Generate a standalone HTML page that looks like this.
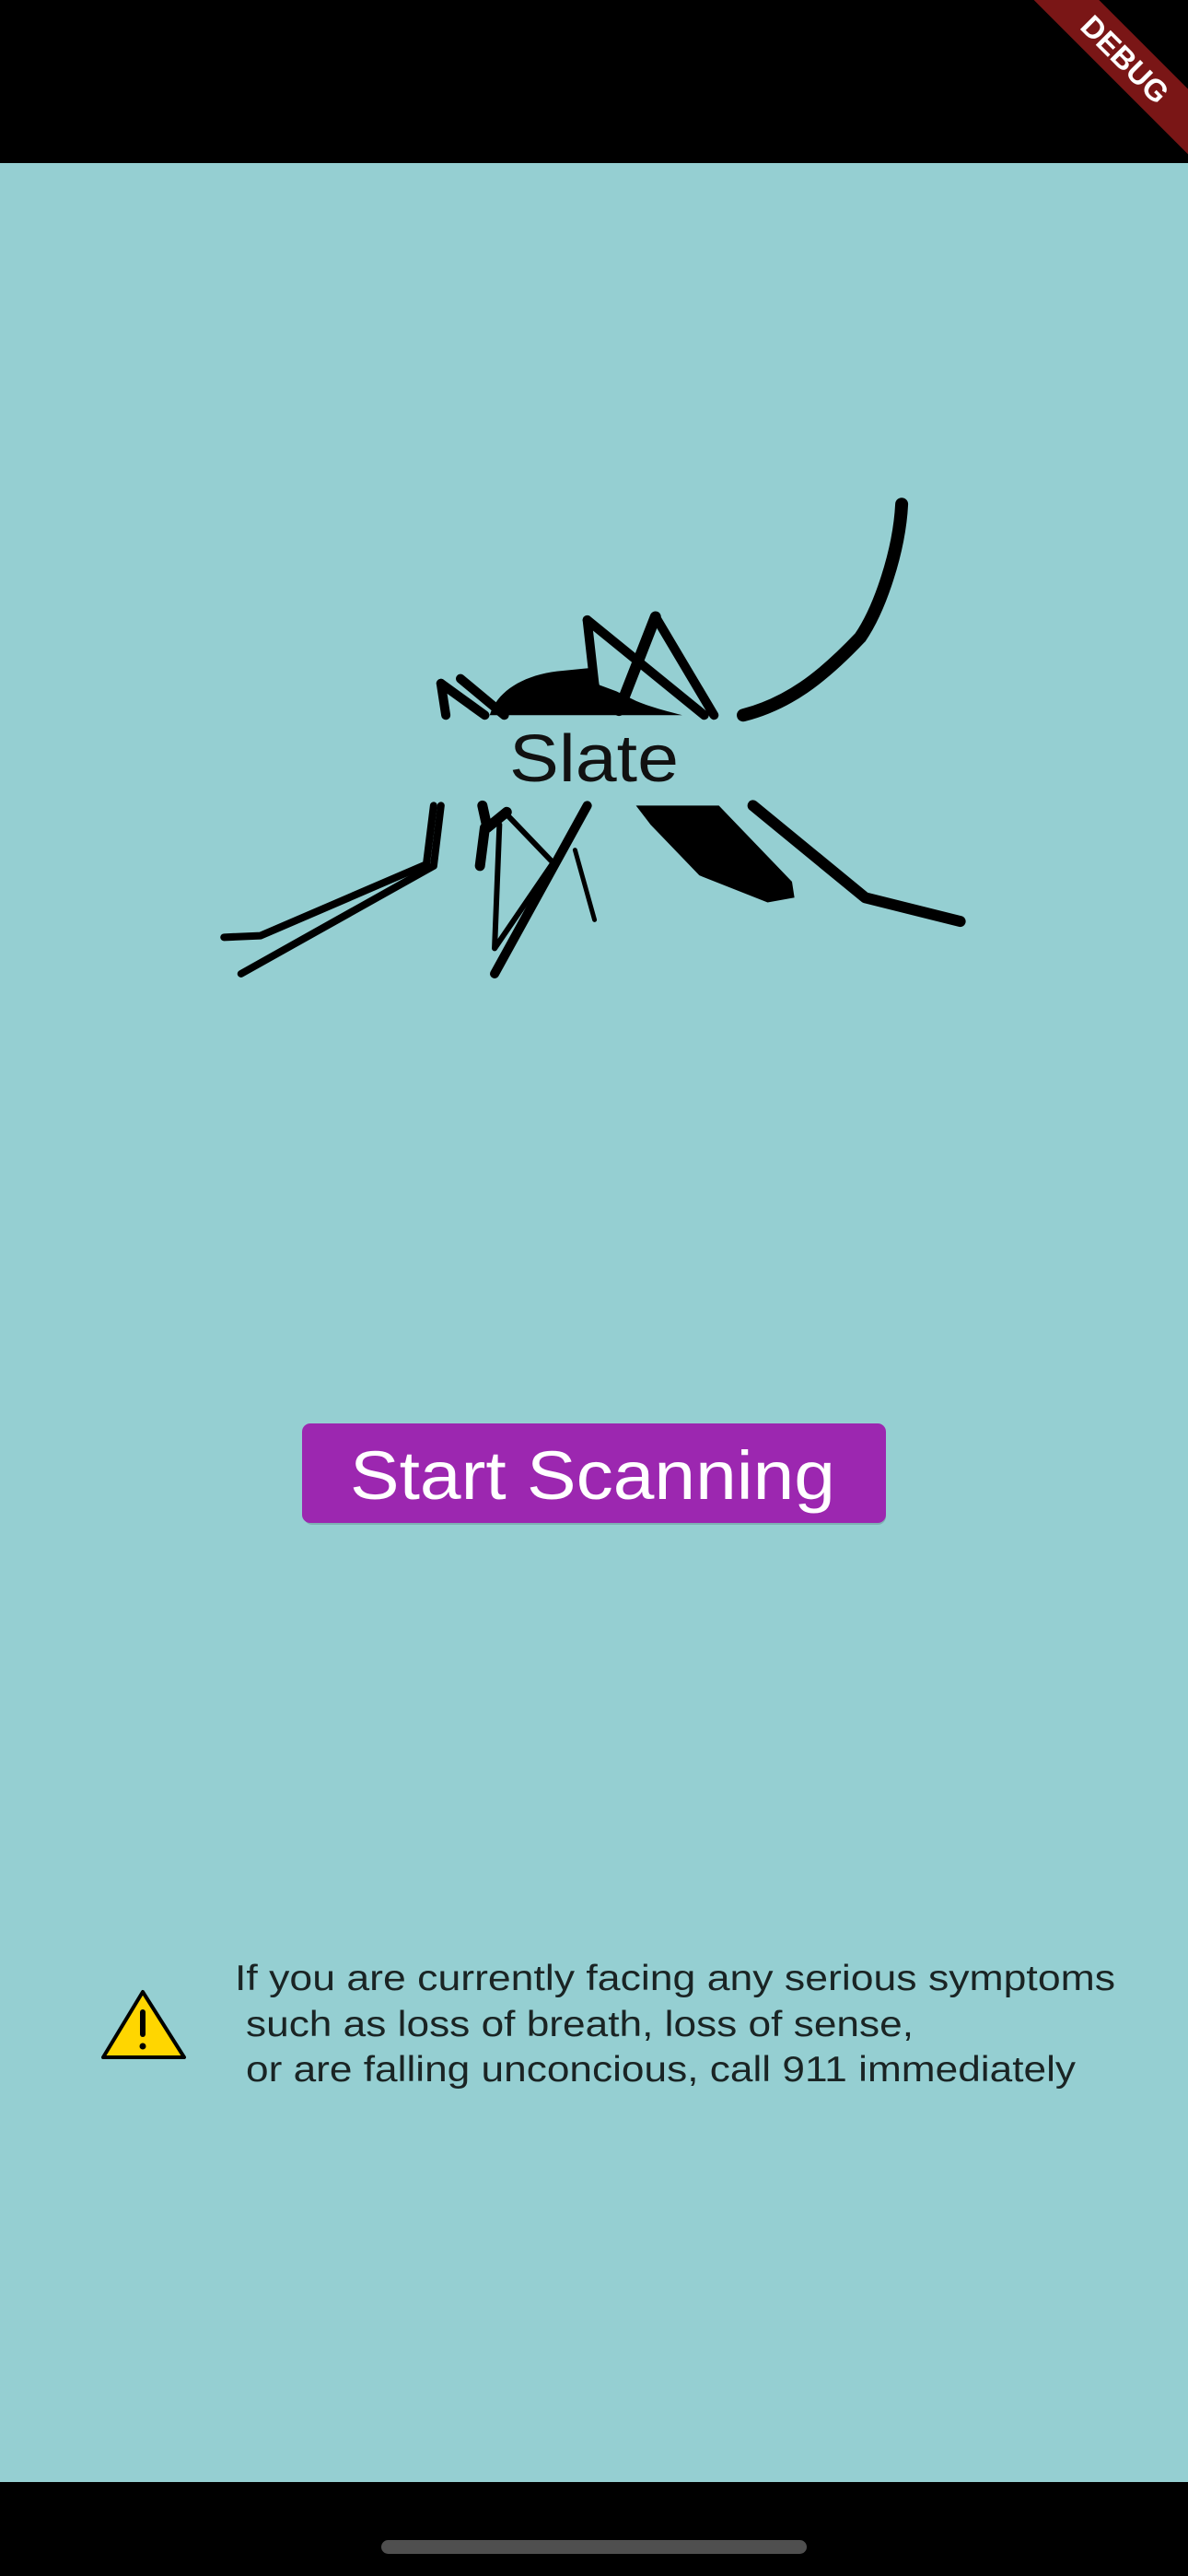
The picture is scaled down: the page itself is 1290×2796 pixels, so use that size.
<!DOCTYPE html>
<html><head><meta charset="utf-8"><style>
html,body{margin:0;padding:0;width:1290px;height:2796px;overflow:hidden;background:#95cfd2;}
svg{display:block}
</style></head><body>
<svg width="1290" height="2796" viewBox="0 0 1290 2796" xmlns="http://www.w3.org/2000/svg">
<rect x="0" y="0" width="1290" height="177" fill="#000"/>
<rect x="0" y="177" width="1290" height="2517" fill="#95cfd2"/>
<rect x="0" y="2694" width="1290" height="102" fill="#000"/>
<rect x="414" y="2757" width="462" height="15" rx="7.5" fill="#4f4f4f"/>
<g transform="translate(1222,64) rotate(45)">
<rect x="-160" y="-25" width="320" height="50" fill="#7a1616"/>
<text x="0" y="12" text-anchor="middle" font-family="Liberation Sans, sans-serif" font-weight="bold" font-size="33" fill="#fff">DEBUG</text>
</g>
<g transform="translate(230,530) scale(0.5294,0.3444)" fill="none" stroke="#000" stroke-linecap="round" stroke-linejoin="round">
<path d="M1415,50 C1410,200 1370,380 1330,470 C1250,600 1180,680 1090,715" stroke-width="14" vector-effect="non-scaling-stroke"/>
<path d="M570,715 C585,640 640,585 720,575 L785,565 L795,620 L830,640 L870,670 C900,690 940,705 965,715 Z" fill="#000" stroke="none"/>
<path d="M770,415 L1010,715" stroke-width="10" vector-effect="non-scaling-stroke"/>
<path d="M770,415 L785,620" stroke-width="10" vector-effect="non-scaling-stroke"/>
<path d="M910,405 L835,700" stroke-width="12" vector-effect="non-scaling-stroke"/>
<path d="M910,405 L1030,715" stroke-width="10" vector-effect="non-scaling-stroke"/>
<path d="M470,615 L480,715" stroke-width="10" vector-effect="non-scaling-stroke"/>
<path d="M470,615 L560,715" stroke-width="10" vector-effect="non-scaling-stroke"/>
<path d="M510,600 L600,715" stroke-width="10" vector-effect="non-scaling-stroke"/>
<path d="M1110,1000 L1340,1290 L1535,1365" stroke-width="12" vector-effect="non-scaling-stroke"/>
<path d="M455,1000 L440,1185 L100,1410 L25,1415" stroke-width="8" vector-effect="non-scaling-stroke"/>
<path d="M470,1000 L455,1190 L60,1530" stroke-width="8" vector-effect="non-scaling-stroke"/>
<path d="M770,1000 L580,1530" stroke-width="10" vector-effect="non-scaling-stroke"/>
<path d="M590,1060 L580,1450 L700,1180 L600,1020" stroke-width="6" vector-effect="non-scaling-stroke"/>
<path d="M745,1140 L785,1360" stroke-width="5" vector-effect="non-scaling-stroke"/>
<path d="M555,1000 L565,1070 L605,1020 M560,1070 L550,1190" stroke-width="11" vector-effect="non-scaling-stroke"/>
<path d="M870,1000 L1040,1000 L1190,1240 L1195,1290 L1140,1305 L1000,1220 L900,1060 Z" fill="#000" stroke="none"/>
</g>
<text x="553" y="848" textLength="184" lengthAdjust="spacingAndGlyphs" font-family="Liberation Sans, sans-serif" font-size="72" fill="#111">Slate</text>
<rect x="330" y="1549" width="632" height="106" rx="9" fill="#000" opacity="0.15"/>
<rect x="328" y="1545" width="634" height="108" rx="9" fill="#9c27b0"/>
<text x="380" y="1627" textLength="527" lengthAdjust="spacingAndGlyphs" font-family="Liberation Sans, sans-serif" font-size="74" fill="#fff">Start Scanning</text>
<path d="M155,2162 L200,2233 L112,2233 Z" fill="#ffd600" stroke="#000" stroke-width="4" stroke-linejoin="round"/>
<path d="M155,2184 L155,2208" stroke="#000" stroke-width="6" stroke-linecap="round"/>
<circle cx="155" cy="2221" r="3.5" fill="#000"/>
<g font-family="Liberation Sans, sans-serif" font-size="39" fill="#1a2424">
<text x="255" y="2160" textLength="956" lengthAdjust="spacingAndGlyphs">If you are currently facing any serious symptoms</text>
<text x="267" y="2210" textLength="725" lengthAdjust="spacingAndGlyphs">such as loss of breath, loss of sense,</text>
<text x="267" y="2259" textLength="901" lengthAdjust="spacingAndGlyphs">or are falling unconcious, call 911 immediately</text>
</g>
</svg>
</body></html>
